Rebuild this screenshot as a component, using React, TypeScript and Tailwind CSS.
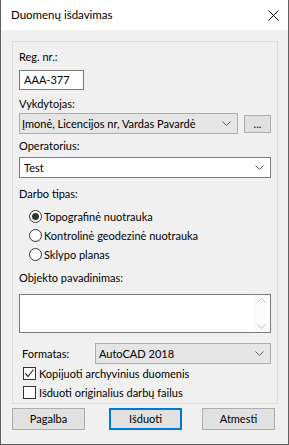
import React from 'react';

function Chevron() {
  return (
    <svg width="9" height="5" viewBox="0 0 9 5" className="shrink-0">
      <polyline points="0.5,0.5 4.5,4.5 8.5,0.5" fill="none" stroke="#606060" strokeWidth="1" />
    </svg>
  );
}

function Radio({ checked, label }: { checked?: boolean; label: string }) {
  return (
    <div className="h-[19px] flex items-center pl-[10px]">
      <div className="w-[13px] h-[13px] rounded-full border border-[#333333] bg-white flex items-center justify-center">
        {checked && <div className="w-[7px] h-[7px] rounded-full bg-[#333333]" />}
      </div>
      <span className="ml-[2px] leading-[16px]">{label}</span>
    </div>
  );
}

function Check({ checked, label }: { checked?: boolean; label: string }) {
  return (
    <div className="h-[19px] flex items-center pl-[4px]">
      <div className="w-[13px] h-[13px] border border-[#333333] bg-white flex items-center justify-center">
        {checked && (
          <svg width="11" height="11" viewBox="0 0 11 11">
            <polyline points="1.5,5.5 4,8.5 9.5,1.5" fill="none" stroke="#333333" strokeWidth="1.2" />
          </svg>
        )}
      </div>
      <span className="ml-[3px] leading-[16px]">{label}</span>
    </div>
  );
}

export default function App() {
  return (
    <div className="w-[289px] h-[445px] bg-[#f0f0f0] border-x border-b border-[#5f5f5f] flex flex-col font-['Lato',sans-serif] text-[11px] text-black">
      <div className="h-[30px] bg-white flex items-center justify-between pl-[10px] pr-[9px] shrink-0">
        <span className="text-[11.5px]">Duomenų išdavimas</span>
        <svg width="11" height="11" viewBox="0 0 11 11">
          <path d="M0.5 0.5 L10.5 10.5 M10.5 0.5 L0.5 10.5" stroke="#000" strokeWidth="1" />
        </svg>
      </div>

      <div className="pl-[11px]">
        <div className="mt-[11px] w-[266px] h-[363px] border border-[#dcdcdc] pt-[7px] pl-[6px] flex flex-col">
          <div className="leading-[16px]">Reg. nr.:</div>
          <div className="mt-[5px] w-[65px] h-[20px] bg-white border border-[#7a7a7a] flex items-center pl-[4px] leading-[16px]">
            AAA-377
          </div>

          <div className="mt-[6px] leading-[16px]">Vykdytojas:</div>
          <div className="mt-[1px] flex items-center">
            <div className="w-[219px] h-[21px] bg-[#e5e5e5] border border-[#adadad] flex items-center justify-between pl-[2px] pr-[6px]">
              <span className="leading-[16px] whitespace-nowrap">Įmonė, Licencijos nr, Vardas Pavardė</span>
              <Chevron />
            </div>
            <div className="ml-[6px] w-[27px] h-[18px] bg-[#e1e1e1] border border-[#adadad] flex items-center justify-center leading-[12px]">
              ...
            </div>
          </div>

          <div className="mt-[4px] leading-[16px]">Operatorius:</div>
          <div className="mt-[3px] w-[252px] h-[21px] bg-white border border-[#7a7a7a] flex items-center justify-between pl-[4px] pr-[6px]">
            <span className="leading-[16px]">Test</span>
            <Chevron />
          </div>

          <div className="mt-[8px] leading-[16px]">Darbo tipas:</div>
          <div className="mt-[5px] flex flex-col">
            <Radio checked label="Topografinė nuotrauka" />
            <Radio label="Kontrolinė geodezinė nuotrauka" />
            <Radio label="Sklypo planas" />
          </div>

          <div className="mt-[6px] leading-[16px]">Objekto pavadinimas:</div>
          <div className="mt-[8px] w-[252px] h-[39px] bg-white border border-[#7a7a7a] flex justify-end">
            <div className="w-[17px] flex flex-col justify-between items-center py-[3px] bg-[#fbfbfb]">
              <svg width="9" height="5" viewBox="0 0 9 5">
                <polyline points="0.5,4.5 4.5,0.5 8.5,4.5" fill="none" stroke="#bfbfbf" strokeWidth="1" />
              </svg>
              <svg width="9" height="5" viewBox="0 0 9 5">
                <polyline points="0.5,0.5 4.5,4.5 8.5,0.5" fill="none" stroke="#bfbfbf" strokeWidth="1" />
              </svg>
            </div>
          </div>

          <div className="mt-[10px] flex items-center">
            <span className="pl-[3px] w-[76px] leading-[16px]">Formatas:</span>
            <div className="w-[176px] h-[21px] bg-[#e5e5e5] border border-[#adadad] flex items-center justify-between pl-[3px] pr-[6px]">
              <span className="leading-[16px]">AutoCAD 2018</span>
              <Chevron />
            </div>
          </div>

          <div className="flex flex-col">
            <Check checked label="Kopijuoti archyvinius duomenis" />
            <Check label="Išduoti originalius darbų failus" />
          </div>
        </div>

        <div className="mt-[4px] flex items-center">
          <div className="w-[73px] h-[22px] bg-[#e1e1e1] border border-[#adadad] flex items-center justify-center leading-[16px]">
            Pagalba
          </div>
          <div className="ml-[24px] w-[73px] h-[22px] bg-[#e1e1e1] border-2 border-[#0078d7] flex items-center justify-center leading-[16px]">
            Išduoti
          </div>
          <div className="ml-[20px] w-[73px] h-[22px] bg-[#e1e1e1] border border-[#adadad] flex items-center justify-center leading-[16px]">
            Atmesti
          </div>
        </div>
      </div>
    </div>
  );
}
